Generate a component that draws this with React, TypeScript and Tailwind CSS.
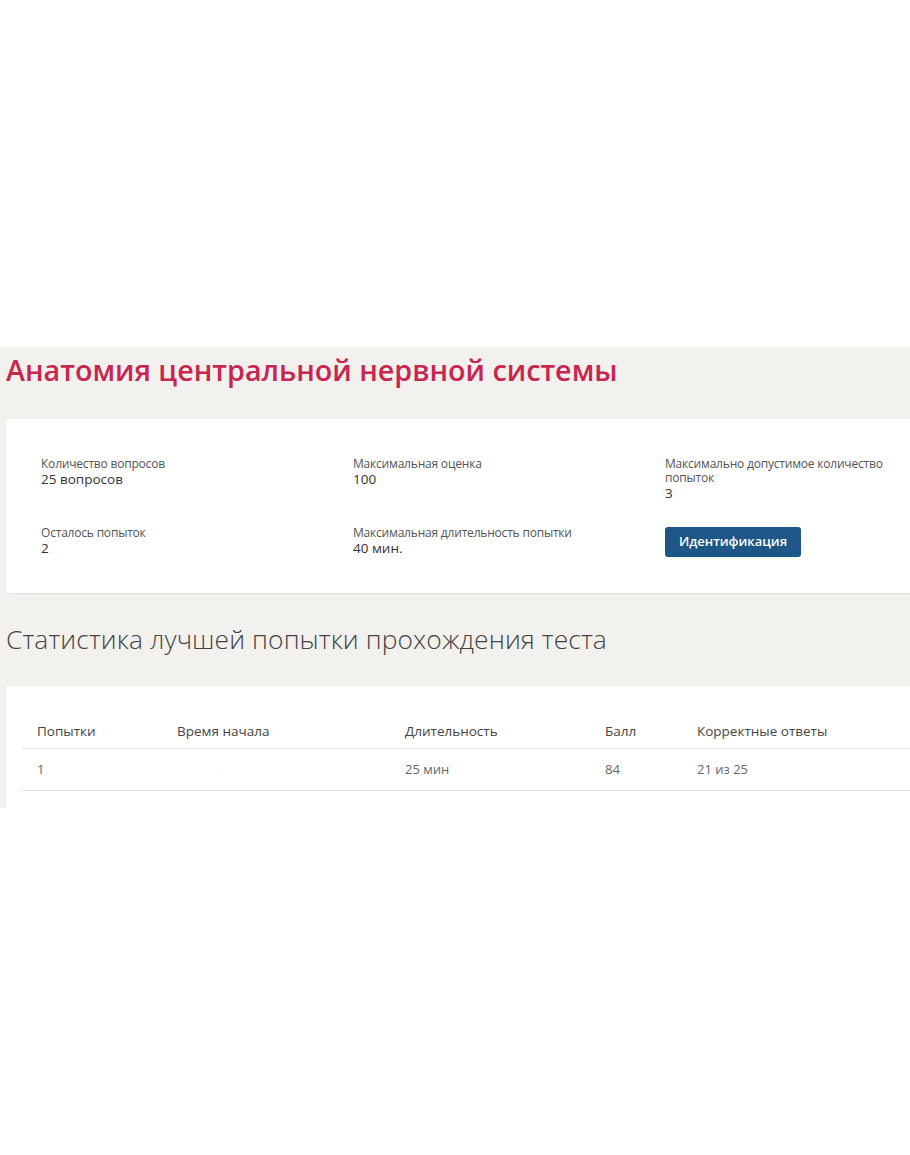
import React from "react";

const font = { fontFamily: '"Open Sans", "Noto Sans", "Liberation Sans", sans-serif' };

function Info({ label, value }: { label: string; value: string }) {
  return (
    <div className="flex flex-col">
      <div className="text-[12px] leading-[14px] text-[#555] tracking-[-0.2px]">{label}</div>
      <div className="text-[13.5px] leading-[17px] text-[#333]">{value}</div>
    </div>
  );
}

export default function App() {
  return (
    <div className="w-[910px] h-[1155px] bg-white" style={font}>
      <div className="h-[347px]" />
      <div className="bg-[#f2f1ee] pb-0">
        <h1 className="pl-[6px] pt-[6px] h-[72px] text-[28.7px] leading-[34px] font-semibold text-[#c8264e]">
          Анатомия центральной нервной системы
        </h1>
        <div className="ml-[6px] bg-white h-[174px] pl-[35px] pt-[38px] grid grid-cols-[312px_312px_1fr] shadow-[0_1px_1px_rgba(0,0,0,0.06)]">
          <div className="flex flex-col gap-[38px]">
            <Info label="Количество вопросов" value="25 вопросов" />
            <Info label="Осталось попыток" value="2" />
          </div>
          <div className="flex flex-col gap-[38px]">
            <Info label="Максимальная оценка" value="100" />
            <Info label="Максимальная длительность попытки" value="40 мин." />
          </div>
          <div className="flex flex-col">
            <div className="text-[12px] leading-[14px] text-[#555] w-[230px] tracking-[-0.2px]">
              Максимально допустимое количество попыток
            </div>
            <div className="text-[13.5px] leading-[17px] text-[#333]">3</div>
            <button className="mt-[25px] w-[136px] h-[30px] rounded-[3px] bg-[#1d5687] text-white text-[13px] font-semibold">
              Идентификация
            </button>
          </div>
        </div>
        <h2 className="pl-[6px] h-[93px] flex items-center text-[26.4px] font-light text-[#444] tracking-[0.1px]">
          Статистика лучшей попытки прохождения теста
        </h2>
        <div className="ml-[6px] bg-white h-[122px] pt-[33px] pl-[16px]">
          <div className="grid grid-cols-[140px_228px_200px_92px_1fr] text-[13.5px] text-[#444] font-medium h-[30px] border-b border-[#e4e4e4] pl-[15px] items-start pt-[2px]">
            <div>Попытки</div>
            <div>Время начала</div>
            <div>Длительность</div>
            <div>Балл</div>
            <div>Корректные ответы</div>
          </div>
          <div className="grid grid-cols-[140px_228px_200px_92px_1fr] text-[13px] text-[#666] h-[42px] border-b border-[#e4e4e4] pl-[15px] items-center">
            <div>1</div>
            <div className="pl-[40px] text-[#ccc] text-[8px]">.</div>
            <div>25 мин</div>
            <div>84</div>
            <div>21 из 25</div>
          </div>
        </div>
      </div>
    </div>
  );
}
